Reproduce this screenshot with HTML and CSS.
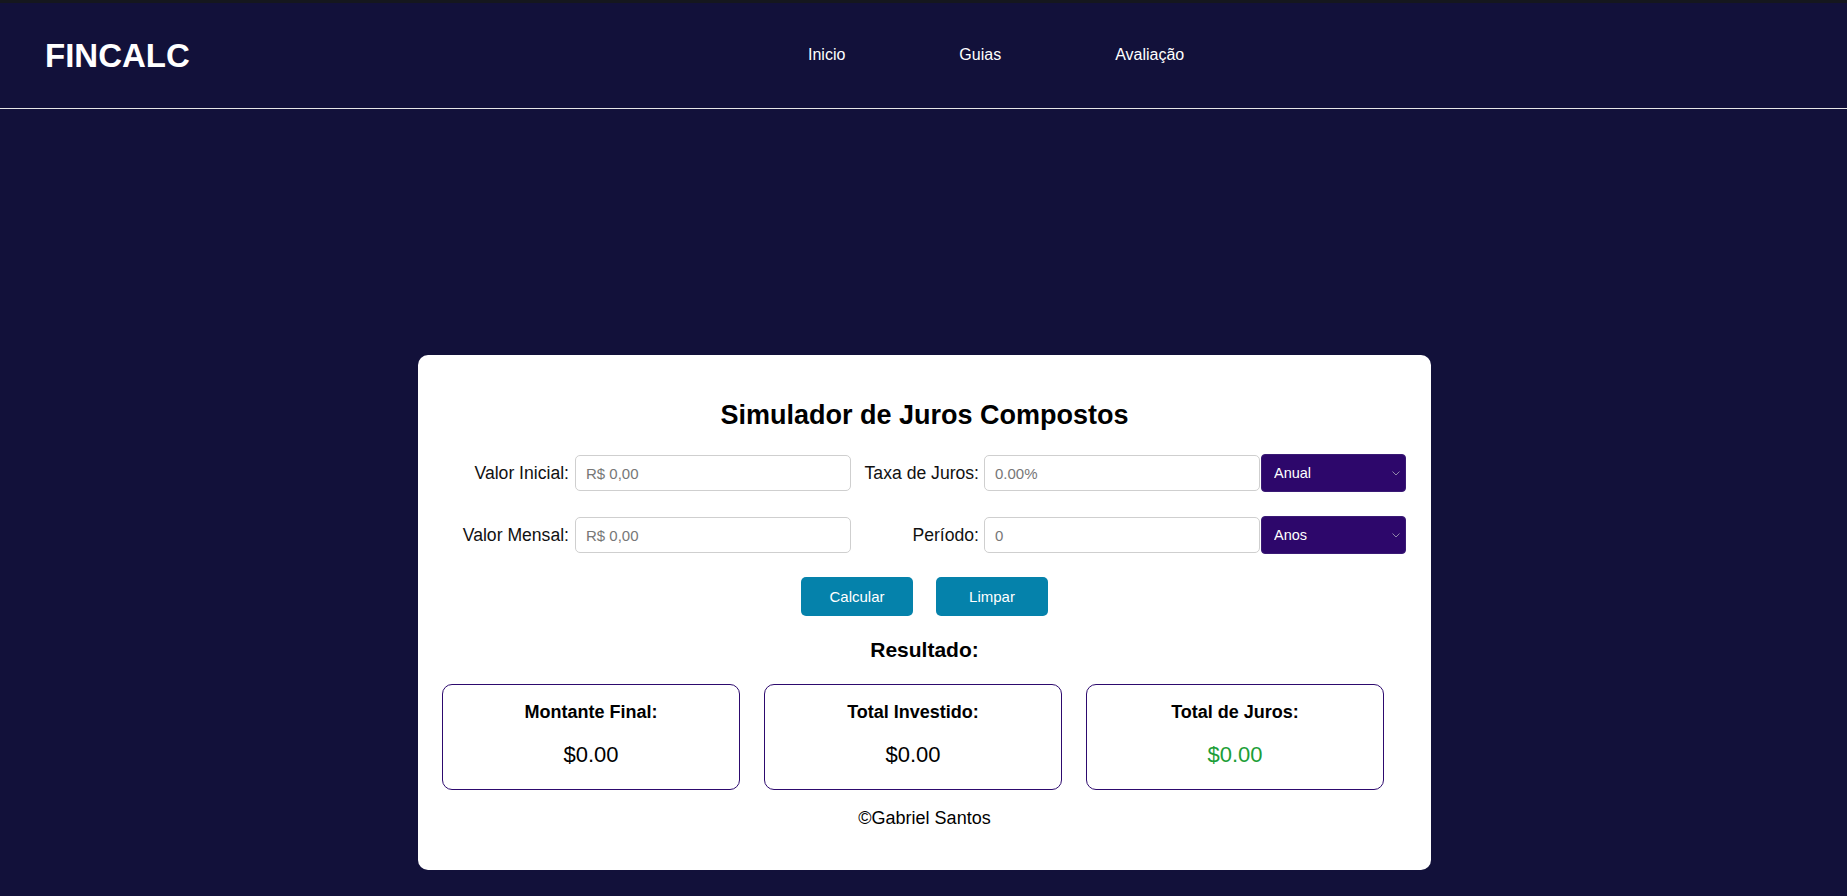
FILE: index.html
```html
<!DOCTYPE html>
<html lang="pt-BR">
<head>
<meta charset="utf-8">
<title>FINCALC</title>
<link rel="stylesheet" href="styles.css">
</head>
<body>
<div class="topbar"></div>
<header class="header">
  <div class="logo">FINCALC</div>
  <nav class="nav">
    <a href="#">Inicio</a>
    <a href="#">Guias</a>
    <a href="#">Avaliação</a>
  </nav>
</header>
<main class="main">
  <section class="card">
    <h1 class="title">Simulador de Juros Compostos</h1>
    <div class="form">
      <div class="row">
        <label class="label">Valor Inicial:</label>
        <input class="field" type="text" placeholder="R$ 0,00">
        <label class="label label2">Taxa de Juros:</label>
        <input class="field field2" type="text" placeholder="0.00%">
        <div class="select-wrap">
          <select class="select"><option>Anual</option><option>Mensal</option></select>
          <svg class="chev" width="8" height="5" viewBox="0 0 8 5"><path d="M0.5 0.5 L4 4 L7.5 0.5" fill="none" stroke="#8f86a8" stroke-width="1"/></svg>
        </div>
      </div>
      <div class="row">
        <label class="label">Valor Mensal:</label>
        <input class="field" type="text" placeholder="R$ 0,00">
        <label class="label label2">Período:</label>
        <input class="field field2" type="text" placeholder="0">
        <div class="select-wrap">
          <select class="select"><option>Anos</option><option>Meses</option></select>
          <svg class="chev" width="8" height="5" viewBox="0 0 8 5"><path d="M0.5 0.5 L4 4 L7.5 0.5" fill="none" stroke="#8f86a8" stroke-width="1"/></svg>
        </div>
      </div>
    </div>
    <div class="buttons">
      <button class="btn" type="button">Calcular</button>
      <button class="btn" type="button">Limpar</button>
    </div>
    <h2 class="result-title">Resultado:</h2>
    <div class="results">
      <div class="box">
        <div class="box-title">Montante Final:</div>
        <div class="box-value">$0.00</div>
      </div>
      <div class="box">
        <div class="box-title">Total Investido:</div>
        <div class="box-value">$0.00</div>
      </div>
      <div class="box">
        <div class="box-title">Total de Juros:</div>
        <div class="box-value green">$0.00</div>
      </div>
    </div>
    <p class="footer">©Gabriel Santos</p>
  </section>
</main>
</body>
</html>
```

FILE: styles.css
```css
* { box-sizing: border-box; }
html, body {
  margin: 0;
  padding: 0;
  background: #12113a;
  font-family: "Liberation Sans", Arial, sans-serif;
  color: #000;
}
.topbar {
  height: 3px;
  background: #15171e;
}
.header {
  height: 106px;
  display: flex;
  align-items: center;
  padding-left: 45px;
  border-bottom: 1px solid #e6e6e6;
  padding-bottom: 1px;
}
.logo {
  width: 141px;
  font-size: 33px;
  line-height: 33px;
  font-weight: bold;
  color: #fff;
}
.nav {
  display: flex;
  gap: 114px;
  margin-left: 622px;
}
.nav a {
  color: #fff;
  text-decoration: none;
  font-size: 16px;
  line-height: 16px;
}
.main {
  padding: 246px 0 26px 2px;
}
.card {
  width: 1013px;
  margin: 0 auto;
  background: #fff;
  border-radius: 10px;
  padding: 45px 0 41px;
}
.title {
  margin: 0;
  text-align: center;
  font-size: 27px;
  line-height: 31px;
  font-weight: bold;
}
.form {
  margin-top: 23px;
  display: flex;
  flex-direction: column;
  gap: 24px;
}
.row {
  display: flex;
  align-items: center;
  height: 38px;
  padding-left: 33px;
}
.label {
  width: 118px;
  text-align: right;
  font-size: 17.6px;
  color: #111;
  margin-right: 6px;
}
.label2 {
  margin-right: 5px;
}
.field {
  width: 276px;
  height: 36px;
  border: 1px solid #cfcfcf;
  border-radius: 5px;
  padding: 0 10px;
  font-family: "Liberation Sans", Arial, sans-serif;
  font-size: 15px;
  color: #222;
  outline: none;
  margin-right: 10px;
}
.field2 {
  margin-right: 1px;
}
.field::placeholder {
  color: #777;
}
.select-wrap {
  position: relative;
  width: 145px;
  height: 38px;
}
.select {
  appearance: none;
  -webkit-appearance: none;
  width: 100%;
  height: 100%;
  background: #2d076b;
  color: #fff;
  border: 1px solid #3a1a75;
  border-radius: 4px;
  padding: 0 12px;
  font-family: "Liberation Sans", Arial, sans-serif;
  font-size: 14.5px;
  outline: none;
}
.chev {
  position: absolute;
  right: 6px;
  top: 17px;
  pointer-events: none;
}
.buttons {
  margin-top: 23px;
  display: flex;
  justify-content: center;
  gap: 23px;
}
.btn {
  width: 112px;
  height: 39px;
  border: none;
  border-radius: 5px;
  background: #0582ab;
  color: #fff;
  font-family: "Liberation Sans", Arial, sans-serif;
  font-size: 15px;
  cursor: pointer;
}
.result-title {
  margin: 22px 0 0;
  text-align: center;
  font-size: 21px;
  line-height: 24px;
  font-weight: bold;
}
.results {
  margin-top: 22px;
  display: flex;
  gap: 24px;
  padding-left: 24px;
}
.box {
  width: 298px;
  height: 106px;
  border: 1px solid #2d0a6e;
  border-radius: 10px;
  padding: 17px 10px 22px;
  text-align: center;
}
.box-title {
  font-size: 18px;
  line-height: 21px;
  font-weight: bold;
}
.box-value {
  margin-top: 19px;
  font-size: 22px;
  line-height: 25px;
}
.green {
  color: #1c9e37;
}
.footer {
  margin: 18px 0 0;
  text-align: center;
  font-size: 18px;
  line-height: 21px;
}
```
